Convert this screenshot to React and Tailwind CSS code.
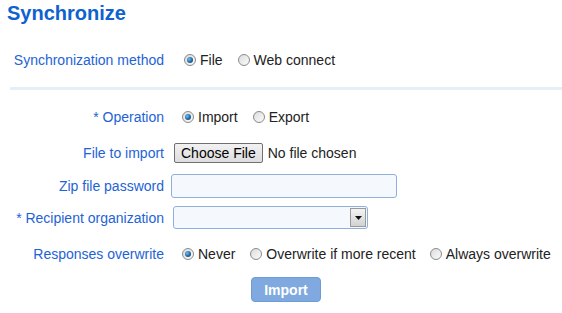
import React from "react";

function Radio({ checked }) {
  return (
    <span className="relative inline-block w-[12px] h-[12px] rounded-full border border-[#8a8a8a] bg-gradient-to-br from-[#dcdcdc] to-[#fbfbfb] shrink-0">
      {checked && (
        <span className="absolute left-[2px] top-[2px] w-[6px] h-[6px] rounded-full bg-[radial-gradient(circle_at_35%_35%,#6ec0f0,#1f5e9a_60%,#0d3e6e)]" />
      )}
    </span>
  );
}

function RadioItem({ checked, label, className = "" }) {
  return (
    <span className={"inline-flex items-center gap-[4px] " + className}>
      <Radio checked={checked} />
      <span className="text-[#222] text-[14px] leading-none">{label}</span>
    </span>
  );
}

function Label({ children }) {
  return (
    <div className="text-right text-[14px] text-[#1e63d6] leading-none">{children}</div>
  );
}

export default function App() {
  return (
    <div className="w-[562px] h-[313px] bg-white font-['Liberation_Sans',Arial,sans-serif] overflow-hidden">
      <div className="h-[26px] pl-[7px] pt-[1px] text-[20px] font-bold text-[#0e62d0] leading-[24px]">
        Synchronize
      </div>
      <div className="h-[36px] mt-[16px] flex items-center">
        <div className="w-[164px] text-right text-[14px] text-[#1e63d6] leading-none">
          Synchronization method
        </div>
        <div className="ml-[20px] flex items-center">
          <RadioItem checked label="File" />
          <RadioItem label="Web connect" className="ml-[15px]" />
        </div>
      </div>
      <div className="mt-[9px] ml-[10px] h-[3px] bg-[#e6eef7]" />
      <div className="mt-[9px] grid grid-cols-[164px_1fr] gap-x-[8px]">
        <div className="h-[36px] flex items-center justify-end"><Label>* Operation</Label></div>
        <div className="h-[36px] flex items-center pl-[10px]">
          <RadioItem checked label="Import" />
          <RadioItem label="Export" className="ml-[15px]" />
        </div>

        <div className="h-[36px] flex items-center justify-end"><Label>File to import</Label></div>
        <div className="h-[36px] flex items-center pl-[2px]">
          <span className="h-[20px] px-[6px] flex items-center border border-[#707070] rounded-[2px] bg-gradient-to-b from-[#f2f2f2] to-[#dddddd] text-[14px] text-black leading-none">
            Choose File
          </span>
          <span className="ml-[5px] text-[14px] text-[#222] leading-none">No file chosen</span>
        </div>

        <div className="h-[30px] flex items-center justify-end"><Label>Zip file password</Label></div>
        <div className="h-[30px] flex items-center -ml-[1px]">
          <div className="w-[226px] h-[24px] border border-[#8fb0da] rounded-[3px] bg-[#f5f9fd]" />
        </div>

        <div className="h-[33px] flex items-center justify-end"><Label>* Recipient organization</Label></div>
        <div className="h-[33px] flex items-center pl-[1px]">
          <div className="w-[195px] h-[23px] border border-[#8fb0da] rounded-[3px] bg-[#f5f9fd] flex items-center justify-end pr-[1px]">
            <div className="w-[16px] h-[19px] border border-[#9a9a9a] bg-gradient-to-b from-[#f4f4f4] to-[#d2d2d2] flex items-center justify-center">
              <svg width="7" height="4" viewBox="0 0 7 4"><path d="M0 0h7L3.5 4z" fill="#111" /></svg>
            </div>
          </div>
        </div>

        <div className="h-[40px] flex items-center justify-end"><Label>Responses overwrite</Label></div>
        <div className="h-[40px] flex items-center pl-[10px]">
          <RadioItem checked label="Never" />
          <RadioItem label="Overwrite if more recent" className="ml-[15px]" />
          <RadioItem label="Always overwrite" className="ml-[14px]" />
        </div>

        <div />
        <div className="h-[31px] flex items-center pl-[79px]">
          <div className="w-[70px] h-[25px] rounded-[4px] border border-[#6e9bd8] bg-[#80a9e0] text-white font-bold text-[14px] flex items-center justify-center leading-none">
            Import
          </div>
        </div>
      </div>
    </div>
  );
}
